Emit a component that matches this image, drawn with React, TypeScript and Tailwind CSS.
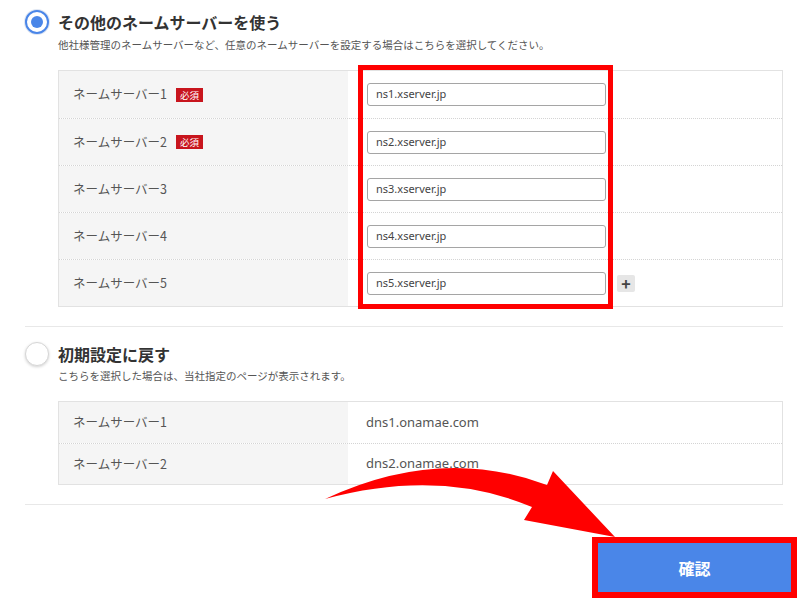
import React from "react";

const JP = "font-['Noto_Sans_CJK_JP','Noto_Sans',sans-serif]";

const customServers = [
  { label: "ネームサーバー1", value: "ns1.xserver.jp", required: true },
  { label: "ネームサーバー2", value: "ns2.xserver.jp", required: true },
  { label: "ネームサーバー3", value: "ns3.xserver.jp", required: false },
  { label: "ネームサーバー4", value: "ns4.xserver.jp", required: false },
  { label: "ネームサーバー5", value: "ns5.xserver.jp", required: false },
];

const defaultServers = [
  { label: "ネームサーバー1", value: "dns1.onamae.com" },
  { label: "ネームサーバー2", value: "dns2.onamae.com" },
];

function Radio({ checked }: { checked: boolean }) {
  if (checked) {
    return (
      <div className="flex h-6 w-6 shrink-0 items-center justify-center rounded-full border-2 border-[#4a86e8] bg-white shadow-[0_0_0_1px_#dfe6f2]">
        <div className="h-3 w-3 rounded-full bg-[#4a86e8]" />
      </div>
    );
  }
  return (
    <div className="h-6 w-6 shrink-0 rounded-full border border-[#d6d6d6] bg-white shadow-[0_1px_3px_rgba(0,0,0,0.18)]" />
  );
}

function Arrow() {
  return (
    <svg className="pointer-events-none absolute left-0 top-0" width="800" height="603" viewBox="0 0 800 603">
      <path
        d="M325 499 Q440 445 547 485 L553 471 L615 537 L524 520 L532 507 Q440 468 325 499 Z"
        fill="#ff0000"
      />
    </svg>
  );
}

export default function App() {
  return (
    <div className={`relative h-[603px] w-[800px] overflow-hidden bg-white ${JP}`}>
      <div className="pl-[25px] pt-[10px]">
        {/* その他のネームサーバー */}
        <div className="flex h-6 items-center">
          <Radio checked />
          <span className="ml-[9px] text-[16px] font-bold leading-6 text-[#333]">その他のネームサーバーを使う</span>
        </div>
        <p className="ml-[33px] mt-[3px] text-[10.5px] leading-4 text-[#555]">
          他社様管理のネームサーバーなど、任意のネームサーバーを設定する場合はこちらを選択してください。
        </p>

        <div className="ml-[33px] mt-[17px] w-[725px] border border-[#e2e2e2]">
          {customServers.map((s, i) => (
            <div
              key={s.label}
              className={`flex h-[47px] ${i > 0 ? "border-t border-dotted border-[#d4d4d4]" : ""}`}
            >
              <div className="flex w-[289px] items-center bg-[#f5f5f5] pl-[14px]">
                <span className="text-[12.5px] text-[#555]">{s.label}</span>
                {s.required && (
                  <span className="ml-[9px] bg-[#c8151d] px-[4px] text-[9.5px] leading-[14px] text-white">必須</span>
                )}
              </div>
              <div className="flex flex-1 items-center pl-[19px]">
                <div className="flex h-[23px] w-[239px] items-center rounded-[3px] border border-[#a5a5a5] bg-white pl-[8px] font-['Noto_Sans',sans-serif] text-[11px] text-[#444]">
                  {s.value}
                </div>
                {i === customServers.length - 1 && (
                  <div className="ml-[11px] flex h-[17px] w-[18px] items-center justify-center rounded-[2px] bg-[#e6e6e6] text-[16px] font-bold leading-none text-[#444]">
                    +
                  </div>
                )}
              </div>
            </div>
          ))}
        </div>

        <div className="mt-[19px] h-px w-[758px] bg-[#e8e8e8]" />

        {/* 初期設定 */}
        <div className="mt-[15px] flex h-6 items-center">
          <Radio checked={false} />
          <span className="ml-[9px] text-[16px] font-bold leading-6 text-[#333]">初期設定に戻す</span>
        </div>
        <p className="ml-[33px] mt-[2px] text-[10.5px] leading-4 text-[#555]">
          こちらを選択した場合は、当社指定のページが表示されます。
        </p>

        <div className="ml-[33px] mt-[17px] w-[725px] border border-[#e2e2e2]">
          {defaultServers.map((s, i) => (
            <div
              key={s.label}
              className={`flex h-[41px] ${i > 0 ? "border-t border-dotted border-[#d4d4d4]" : ""}`}
            >
              <div className="flex w-[289px] items-center bg-[#f5f5f5] pl-[14px]">
                <span className="text-[12.5px] text-[#555]">{s.label}</span>
              </div>
              <div className="flex flex-1 items-center pl-[18px] font-['Noto_Sans',sans-serif] text-[13px] text-[#555]">
                {s.value}
              </div>
            </div>
          ))}
        </div>

        <div className="mt-[19px] h-px w-[758px] bg-[#e8e8e8]" />

        <div className="mt-[32px] flex justify-end pr-[3px]">
          <div className="border-[6px] border-[#ff0000]">
            <button
              type="button"
              className="flex h-[49px] w-[193px] items-center justify-center bg-[#4a86e8] text-[16px] font-bold text-white"
            >
              確認
            </button>
          </div>
        </div>
      </div>

      {/* annotations */}
      <div className="pointer-events-none absolute left-[358px] top-[65px] h-[244px] w-[255px] border-[5px] border-[#ff0000]" />
      <Arrow />
    </div>
  );
}
